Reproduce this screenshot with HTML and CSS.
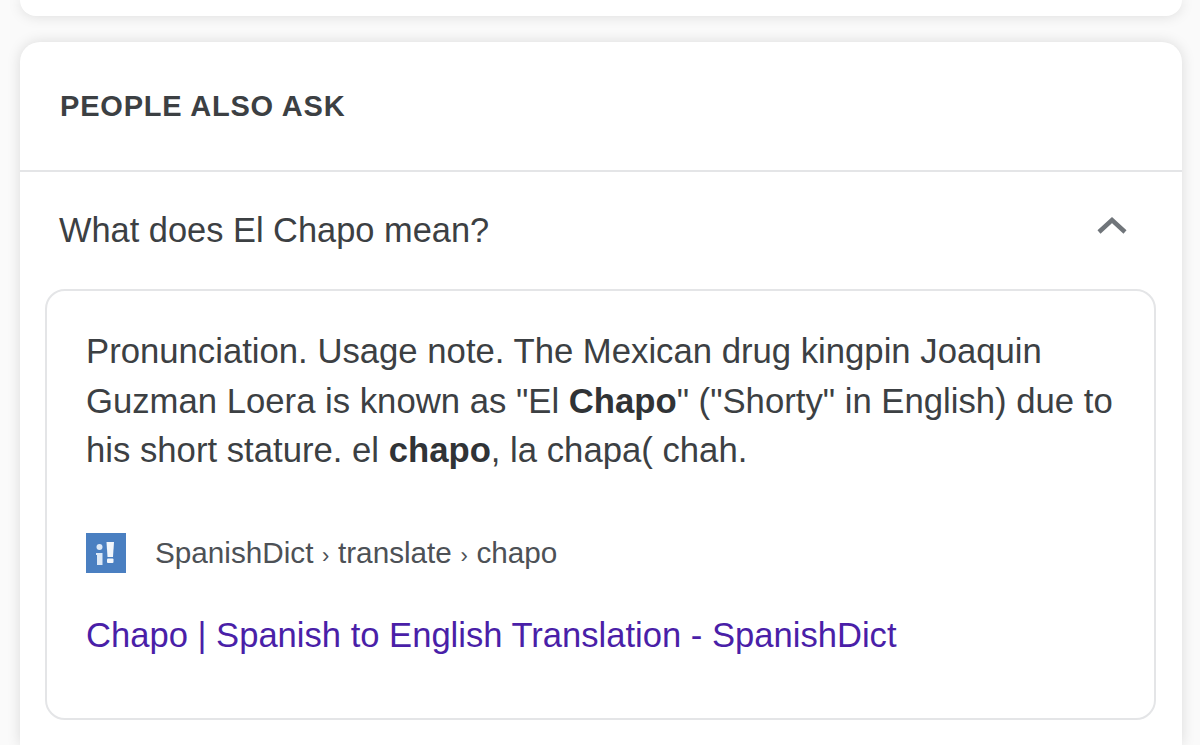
FILE: index.html
```html
<!DOCTYPE html>
<html lang="en">
<head>
  <meta charset="UTF-8" />
  <meta name="viewport" content="width=device-width, initial-scale=1.0"/>
  <title>People also ask</title>
  <link rel="stylesheet" href="styles.css">
</head>
<body>
  <div class="card card-top"></div>

  <div class="card card-main">
    <h2 class="card-title">PEOPLE ALSO ASK</h2>

    <div class="question">
      <span>What does El Chapo mean?</span>
      <svg class="chevron" width="34" height="20" viewBox="0 0 34 20">
        <path d="M3 16 L16 4 L29 16" fill="none" stroke="#70757a" stroke-width="4.5"/>
      </svg>
    </div>

    <div class="answer">
      <p class="answer-text">Pronunciation. Usage note. The Mexican drug kingpin Joaquin Guzman Loera is known as "El <b>Chapo</b>" ("Shorty" in English) due to his short stature. el <b>chapo</b>, la chapa( chah.</p>

      <div class="source">
        <svg class="favicon" width="40" height="40" viewBox="0 0 40 40">
          <rect width="40" height="40" fill="#4a7fc1"/>
          <circle cx="13.5" cy="14" r="3" fill="#dce8f6"/>
          <path d="M10 20 H16.5 V32 H11 V22 H10 Z" fill="#dce8f6"/>
          <path d="M20.5 9 H28 L27 24 H21.5 Z" fill="#f2f6fb"/>
          <rect x="21" y="25.5" width="6.5" height="4.5" rx="1" fill="#f2f6fb"/>
        </svg>
        <span>SpanishDict<span class="sep"> › </span>translate<span class="sep"> › </span>chapo</span>
      </div>

      <a class="result-link" href="#">Chapo | Spanish to English Translation - SpanishDict</a>
    </div>
  </div>
</body>
</html>
```

FILE: styles.css
```css
body {
  margin: 0;
  height: 745px;
  overflow: hidden;
  padding: 0 18px 0 20px;
  box-sizing: border-box;
  background-color: #fafafa;
  font-family: "Liberation Sans", Arial, sans-serif;
  color: #3c4043;
}

.card {
  background-color: #fff;
  border-radius: 20px;
  box-shadow: 0 0 14px rgba(0, 0, 0, 0.13);
}

.card-top {
  height: 16px;
  border-radius: 0 0 20px 20px;
}

.card-main {
  margin-top: 26px;
  height: 703px;
  border-radius: 20px 20px 0 0;
}

.card-title {
  margin: 0;
  height: 130px;
  box-sizing: border-box;
  padding: 47px 40px 0;
  font-size: 29px;
  line-height: 34px;
  font-weight: 700;
  letter-spacing: 0.8px;
  color: #3c4043;
  border-bottom: 2px solid #e4e5e7;
}

.question {
  display: flex;
  justify-content: space-between;
  align-items: center;
  height: 117px;
  box-sizing: border-box;
  padding: 0 52px 0 39px;
  font-size: 34.4px;
  color: #3c4043;
}

.chevron {
  margin-bottom: 10px;
}

.answer {
  margin: 0 26px 0 25px;
  height: 431px;
  box-sizing: border-box;
  padding: 36px 39px 0;
  border: 2px solid #e4e5e7;
  border-radius: 20px;
}

.answer-text {
  margin: 0;
  font-size: 34.7px;
  line-height: 49.5px;
  color: #3c4043;
}

.answer-text b {
  color: #303336;
}

.source {
  display: flex;
  align-items: center;
  gap: 29px;
  margin-top: 57px;
  font-size: 29.7px;
  color: #4d5156;
}

.sep {
  font-size: 22px;
  margin: 0 2.5px;
}

.favicon {
  flex-shrink: 0;
}

.result-link {
  display: block;
  margin-top: 43px;
  font-size: 34.6px;
  color: #4a1fa8;
  text-decoration: none;
}
```
